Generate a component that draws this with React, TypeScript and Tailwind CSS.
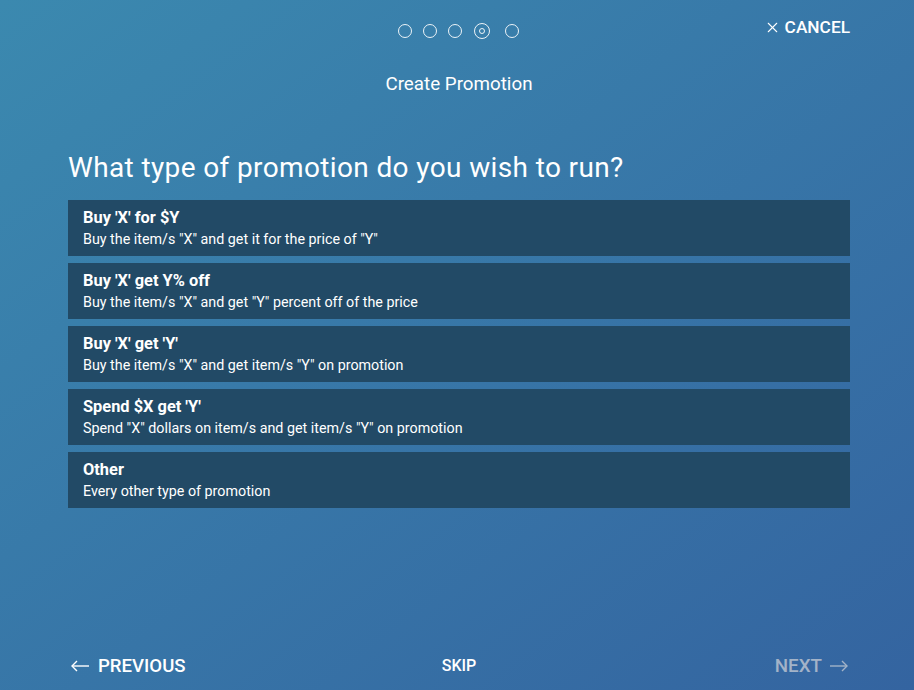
import { X } from "lucide-react";

const options = [
  { title: "Buy 'X' for $Y", desc: 'Buy the item/s "X" and get it for the price of "Y"' },
  { title: "Buy 'X' get Y% off", desc: 'Buy the item/s "X" and get "Y" percent off of the price' },
  { title: "Buy 'X' get 'Y'", desc: 'Buy the item/s "X" and get item/s "Y" on promotion' },
  { title: "Spend $X get 'Y'", desc: 'Spend "X" dollars on item/s and get item/s "Y" on promotion' },
  { title: "Other", desc: "Every other type of promotion" },
];

function Dot() {
  return <span className="w-[14px] h-[14px] rounded-full border-[1.5px] border-white/90" />;
}

function Arrow({ left }: { left?: boolean }) {
  return (
    <svg width="18" height="12" viewBox="0 0 18 12" fill="none" stroke="currentColor" strokeWidth="1.4">
      {left ? (
        <>
          <path d="M1 6h17" />
          <path d="M6 1L1 6l5 5" />
        </>
      ) : (
        <>
          <path d="M0 6h17" />
          <path d="M12 1l5 5-5 5" />
        </>
      )}
    </svg>
  );
}

export default function App() {
  return (
    <div
      className="w-full h-[690px] flex flex-col pl-[68px] pr-[64px] bg-gradient-to-br from-[#3b89af] to-[#3464a0] text-white"
      style={{ fontFamily: "Roboto, 'Liberation Sans', sans-serif" }}
    >
      <div className="grid grid-cols-3 pt-[23px]">
        <div />
        <div className="flex justify-center items-center gap-[11px]">
          <Dot />
          <Dot />
          <Dot />
          <span className="mx-[1px]">
            <span className="w-[16px] h-[16px] rounded-full border-[1.5px] border-white/90 flex items-center justify-center">
              <span className="w-[6px] h-[6px] rounded-full border-[1.5px] border-white/90" />
            </span>
          </span>
          <span className="ml-[3px] flex">
            <Dot />
          </span>
        </div>
        <div className="flex justify-end -mt-[8px]">
          <button className="flex items-center gap-[4px] text-[17.3px] font-medium leading-[20px]">
            <X className="w-[17px] h-[17px]" strokeWidth={1.5} />
            CANCEL
          </button>
        </div>
      </div>

      <div className="text-center text-[18.8px] leading-[24px] mt-[33px]">Create Promotion</div>

      <h1 className="text-[28px] leading-[36px] tracking-[0.37px] mt-[54px] mb-[14px]">
        What type of promotion do you wish to run?
      </h1>

      <div className="flex flex-col gap-[7px]">
        {options.map((o) => (
          <div key={o.title} className="h-[56px] bg-[#224a66] px-[15px] pt-[7px]">
            <div className="text-[16.4px] font-bold leading-[22px]">{o.title}</div>
            <div className="text-[14.3px] leading-[20px]">{o.desc}</div>
          </div>
        ))}
      </div>

      <div className="flex-1" />

      <div className="grid grid-cols-3 items-center pb-[12px]">
        <div className="flex">
          <button className="flex items-center gap-[9px] text-[18.6px] font-medium leading-[24px] pl-[3px]">
            <Arrow left />
            PREVIOUS
          </button>
        </div>
        <div className="flex justify-center">
          <button className="text-[16px] font-medium leading-[24px]">SKIP</button>
        </div>
        <div className="flex justify-end">
          <button className="flex items-center gap-[8px] text-[18.8px] font-medium leading-[24px] text-[#a3b3c8] pr-[2px]">
            NEXT
            <Arrow />
          </button>
        </div>
      </div>
    </div>
  );
}
